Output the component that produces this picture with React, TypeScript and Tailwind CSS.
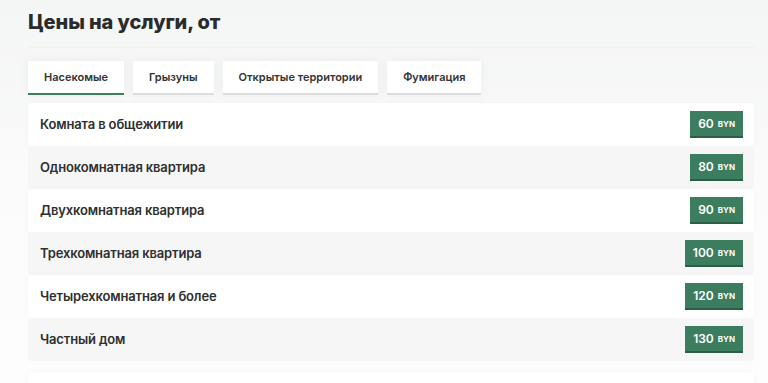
import React from "react";

const tabs = ["Насекомые", "Грызуны", "Открытые территории", "Фумигация"];
const rows: [string, string][] = [
  ["Комната в общежитии", "60"],
  ["Однокомнатная квартира", "80"],
  ["Двухкомнатная квартира", "90"],
  ["Трехкомнатная квартира", "100"],
  ["Четырехкомнатная и более", "120"],
  ["Частный дом", "130"],
];

export default function App() {
  return (
    <div
      className="w-[768px] h-[383px] overflow-hidden bg-[#fbfbfb] relative"
      style={{ fontFamily: "Inter, 'Noto Sans', sans-serif" }}
    >
      <div className="absolute inset-0 bg-gradient-to-b from-[#f4f5f5] via-[#fbfbfb] to-[#fdfdfd]" />
      <div className="relative px-[28px] pt-[9px] pr-[14px]">
        <h2 className="text-[20px] leading-[26px] font-extrabold text-[#2b2b2b] tracking-[-0.1px]">
          Цены на услуги, от
        </h2>
        <div className="mt-[11px] h-[2px] bg-[#f2f2ec]" />
        <div className="mt-[13px] flex gap-[9px]">
          {tabs.map((t, i) => (
            <div
              key={t}
              className={
                "h-[34px] px-[16px] flex items-center bg-white text-[11px] font-semibold text-[#333] shadow-[0_0_10px_rgba(0,0,0,0.06)] border-b-2 " +
                (i === 0 ? "border-[#3d8060]" : "border-[#dcdcdc]")
              }
            >
              {t}
            </div>
          ))}
        </div>
        <div className="mt-[8px] flex flex-col">
          {rows.map(([name, price], i) => (
            <div
              key={name}
              className={
                "h-[43px] flex items-center justify-between pl-[12px] pr-[11px] rounded-[4px] " +
                (i % 2 === 0
                  ? "bg-white shadow-[0_0_6px_rgba(0,0,0,0.03)]"
                  : "bg-[#f6f6f6]")
              }
            >
              <span className="text-[13px] font-semibold text-[#2f2f2f] tracking-[-0.15px]">{name}</span>
              <span className="h-[27px] px-[8px] flex items-center gap-[4px] bg-[#3b7d5e] border-b-2 border-[#2a5e45] text-white">
                <span className="text-[12px] font-semibold">{price}</span>
                <span className="text-[8px] font-bold">BYN</span>
              </span>
            </div>
          ))}
        </div>
        <div className="mt-[11px] h-[40px] bg-white rounded-[4px] shadow-[0_0_6px_rgba(0,0,0,0.04)]" />
      </div>
    </div>
  );
}
